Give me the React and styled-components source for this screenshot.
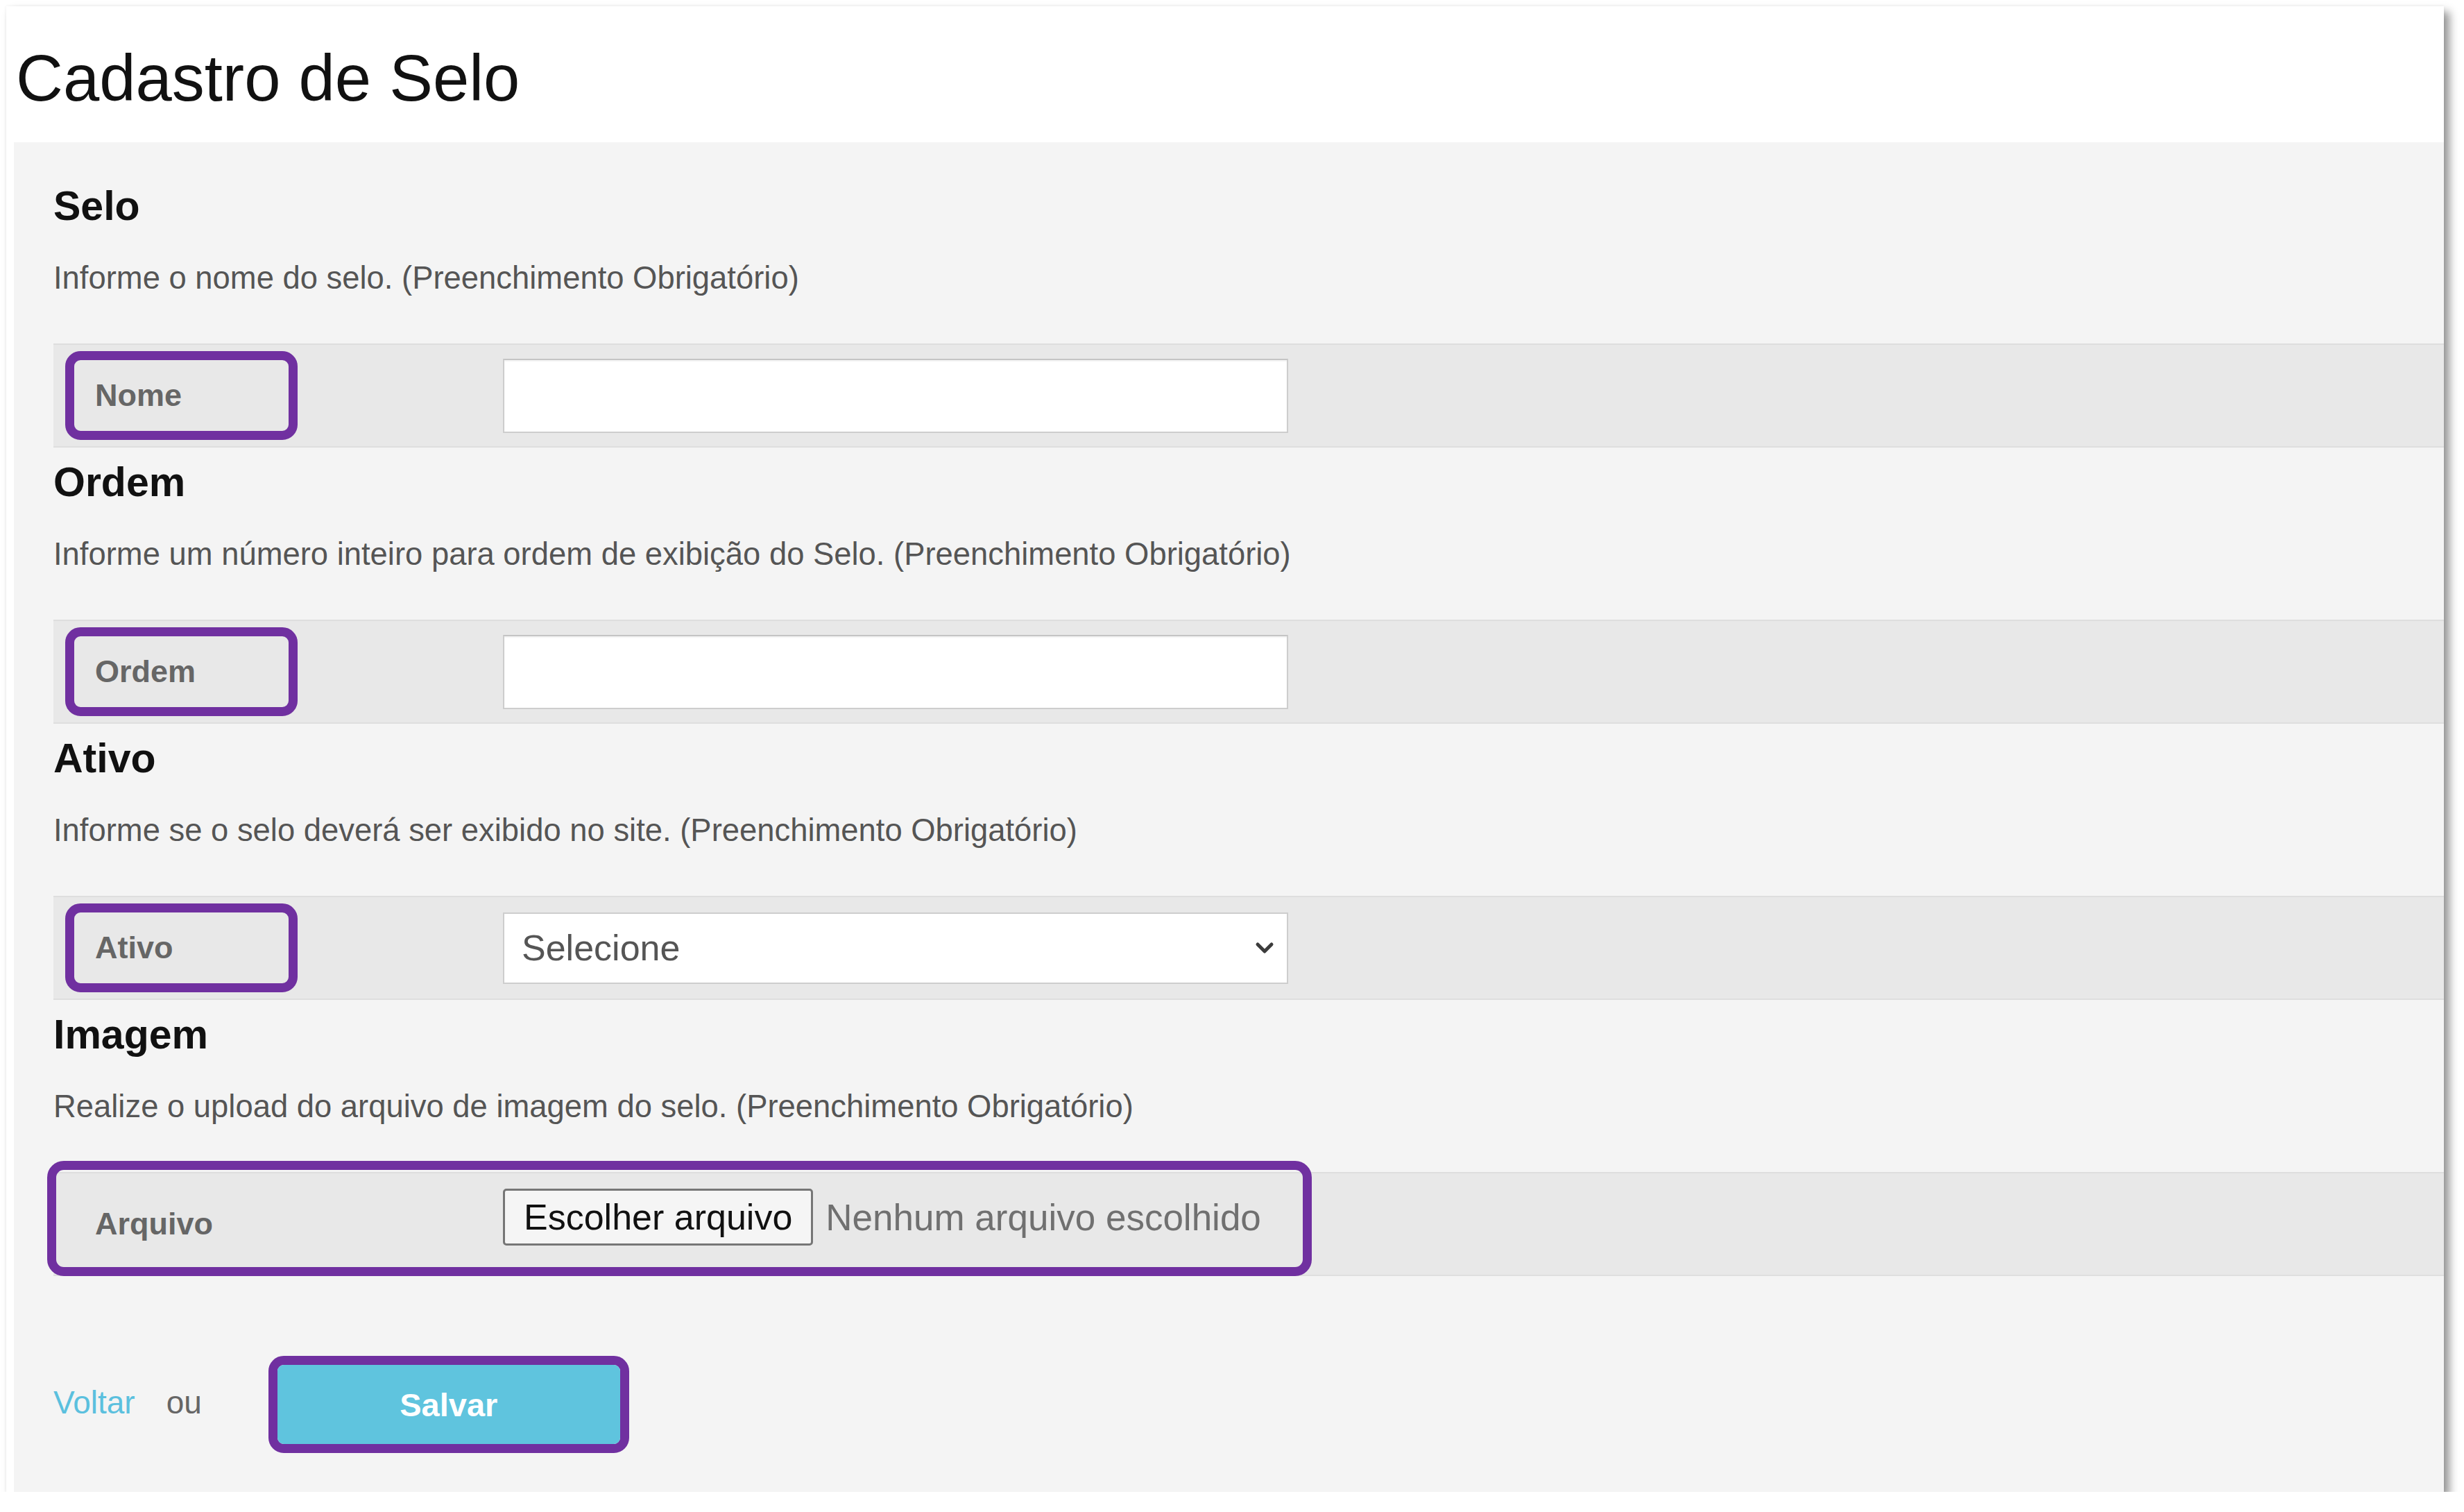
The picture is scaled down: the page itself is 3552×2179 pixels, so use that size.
import React from "react"
import styled, { createGlobalStyle } from "styled-components"

const fields = [
  {
    title: "Selo",
    hint: "Informe o nome do selo. (Preenchimento Obrigatório)",
    label: "Nome",
    kind: "text",
  },
  {
    title: "Ordem",
    hint: "Informe um número inteiro para ordem de exibição do Selo. (Preenchimento Obrigatório)",
    label: "Ordem",
    kind: "text",
  },
  {
    title: "Ativo",
    hint: "Informe se o selo deverá ser exibido no site. (Preenchimento Obrigatório)",
    label: "Ativo",
    kind: "select",
  },
  {
    title: "Imagem",
    hint: "Realize o upload do arquivo de imagem do selo. (Preenchimento Obrigatório)",
    label: "Arquivo",
    kind: "file",
  },
]

const Chevron = () => (
  <svg width="28" height="18" viewBox="0 0 28 18" fill="none">
    <path d="M4 4l10 10 10-10" stroke="#3c3c3c" strokeWidth="5" strokeLinecap="round" strokeLinejoin="round" />
  </svg>
)

const Field = ({ field }) => {
  const boxedLabel = field.kind !== "file"

  return (
    <Section>
      <SectionTitle>{field.title}</SectionTitle>
      <SectionHint>{field.hint}</SectionHint>
      <FieldRow>
        <LabelCell $boxed={boxedLabel}>{field.label}</LabelCell>
        {field.kind === "text" && <TextInput type="text" />}
        {field.kind === "select" && (
          <SelectWrap>
            <Select defaultValue="">
              <option value="">Selecione</option>
              <option value="1">Sim</option>
              <option value="0">Não</option>
            </Select>
            <ChevronSlot>
              <Chevron />
            </ChevronSlot>
          </SelectWrap>
        )}
        {field.kind === "file" && (
          <FilePicker>
            <FileButton type="button">Escolher arquivo</FileButton>
            <FileStatus>Nenhum arquivo escolhido</FileStatus>
          </FilePicker>
        )}
        {!boxedLabel && <Highlight />}
      </FieldRow>
    </Section>
  )
}

const App = () => {
  return (
    <>
      <GlobalStyle />
      <Card>
        <Header>
          <Title>Cadastro de Selo</Title>
        </Header>
        <Panel>
          {fields.map(f => (
            <Field key={f.label} field={f} />
          ))}
          <Actions>
            <BackLink href="#">Voltar</BackLink>
            <Or>ou</Or>
            <SaveFrame>
              <SaveButton type="button">Salvar</SaveButton>
            </SaveFrame>
          </Actions>
        </Panel>
      </Card>
    </>
  )
}

export default App

const GlobalStyle = createGlobalStyle`
  * {
    box-sizing: border-box;
  }
  body {
    margin: 0;
    background: #fff;
    font-family: "Liberation Sans", Arial, sans-serif;
  }
`

const Card = styled.div`
  margin: 9px 0 0 9px;
  width: 3514px;
  height: 2141px;
  background: #fff;
  box-shadow: 8px 8px 12px rgba(0, 0, 0, 0.42), 0 0 4px rgba(0, 0, 0, 0.06);
  display: flex;
  flex-direction: column;
`

const Header = styled.div`
  height: 196px;
  padding: 49px 0 0 14px;
`

const Title = styled.h1`
  margin: 0;
  font-size: 94px;
  line-height: 110px;
  font-weight: 400;
  color: #111;
`

const Panel = styled.div`
  flex: 1;
  margin-left: 11px;
  padding: 42px 0 0 57px;
  background: #f4f4f4;
`

const Section = styled.div`
  padding-top: 15px;
`

const SectionTitle = styled.h2`
  margin: 0;
  font-size: 59px;
  line-height: 70px;
  font-weight: 700;
  color: #111;
`

const SectionHint = styled.p`
  margin: 41px 0 0;
  font-size: 45.4px;
  line-height: 56px;
  color: #555;
`

const FieldRow = styled.div`
  position: relative;
  margin-top: 66px;
  height: 150px;
  padding-left: 17px;
  display: grid;
  grid-template-columns: 631px 1132px;
  align-items: center;
  background: #e8e8e8;
  border-top: 2px solid #dedede;
  border-bottom: 2px solid #dedede;
`

const LabelCell = styled.div`
  width: 335px;
  height: 128px;
  padding-left: 30px;
  display: flex;
  align-items: center;
  border: 13px solid ${p => (p.$boxed ? "#7030a0" : "transparent")};
  border-radius: 22px;
  font-size: 45px;
  font-weight: 700;
  color: #666;
`

const TextInput = styled.input`
  width: 1132px;
  height: 107px;
  background: #fff;
  border: 2px solid #cdcdcd;
  border-top-color: #c4c4c4;
  box-shadow: inset 0 2px 2px rgba(0, 0, 0, 0.05);
  font-size: 52px;
  font-family: inherit;
  padding: 0 27px;
  outline: none;
`

const SelectWrap = styled.div`
  position: relative;
  width: 1132px;
  height: 103px;
`

const Select = styled.select`
  appearance: none;
  width: 100%;
  height: 100%;
  background: #fff;
  border: 2px solid #cdcdcd;
  border-radius: 0;
  padding: 0 25px;
  font-size: 52px;
  font-family: inherit;
  color: #555;
  outline: none;
`

const ChevronSlot = styled.span`
  position: absolute;
  right: 20px;
  top: 50%;
  transform: translateY(-50%);
  display: flex;
  pointer-events: none;
`

const FilePicker = styled.div`
  display: flex;
  align-items: center;
  gap: 18px;
  margin-bottom: 20px;
  white-space: nowrap;
`

const FileButton = styled.button`
  height: 82px;
  padding: 0 27px;
  background: #f5f5f5;
  border: 3px solid #767676;
  border-radius: 5px;
  font-size: 52px;
  font-family: inherit;
  color: #111;
`

const FileStatus = styled.span`
  font-size: 53px;
  color: #707070;
`

const Highlight = styled.div`
  position: absolute;
  left: -9px;
  top: -18px;
  width: 1823px;
  height: 166px;
  border: 13px solid #7030a0;
  border-radius: 24px;
  pointer-events: none;
`

const Actions = styled.div`
  margin-top: 115px;
  display: flex;
  align-items: center;
`

const BackLink = styled.a`
  font-size: 46px;
  color: #5bc0de;
  text-decoration: none;
  margin-top: -6px;
`

const Or = styled.span`
  margin-left: 45px;
  margin-top: -6px;
  font-size: 46px;
  color: #666;
`

const SaveFrame = styled.div`
  margin-left: 96px;
  width: 520px;
  height: 140px;
  border: 13px solid #7030a0;
  border-radius: 22px;
  overflow: hidden;
  display: flex;
`

const SaveButton = styled.button`
  flex: 1;
  border: none;
  border-radius: 6px;
  background: #5fc4de;
  color: #fff;
  font-size: 47px;
  font-weight: 700;
  font-family: inherit;
`
